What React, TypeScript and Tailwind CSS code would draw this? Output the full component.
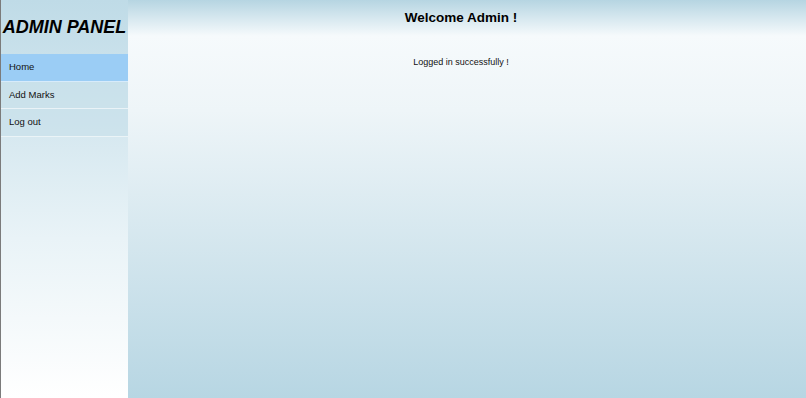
import React from 'react'

const menu = [
  { label: 'Home', active: true },
  { label: 'Add Marks', active: false },
  { label: 'Log out', active: false },
]

export default function App() {
  return (
    <div className="flex h-[398px] w-[806px] overflow-hidden font-['Liberation_Sans',Arial,sans-serif] text-black">
      {/* sidebar */}
      <aside className="flex w-[128px] shrink-0 flex-col border-l border-[#7b7b7b] bg-[linear-gradient(to_bottom,#bfdbe7_0%,#e9f3f7_60%,#ffffff_100%)]">
        <div className="flex h-[54px] items-center justify-center">
          <h1 className="whitespace-nowrap text-[18px] font-bold italic leading-none">ADMIN PANEL</h1>
        </div>
        <ul>
          {menu.map((item) => (
            <li
              key={item.label}
              className={`flex h-[27.5px] items-center border-b border-white/60 pl-2 text-[9.5px] text-[#111] ${
                item.active ? 'bg-[#9bcdf5]' : 'bg-[#c6dfe9]/60'
              }`}
            >
              {item.label}
            </li>
          ))}
        </ul>
      </aside>

      {/* main */}
      <main className="flex flex-1 flex-col items-center pr-3 bg-[linear-gradient(to_bottom,#b6d5e2_0px,#f6fafc_36px,#eef5f8_110px,#b7d6e3_100%)]">
        <h2 className="mt-[10px] text-[13.5px] font-bold leading-[15px]">Welcome Admin !</h2>
        <p className="mt-[32px] text-[9px] leading-[10px] text-[#111]">Logged in successfully !</p>
      </main>
    </div>
  )
}
